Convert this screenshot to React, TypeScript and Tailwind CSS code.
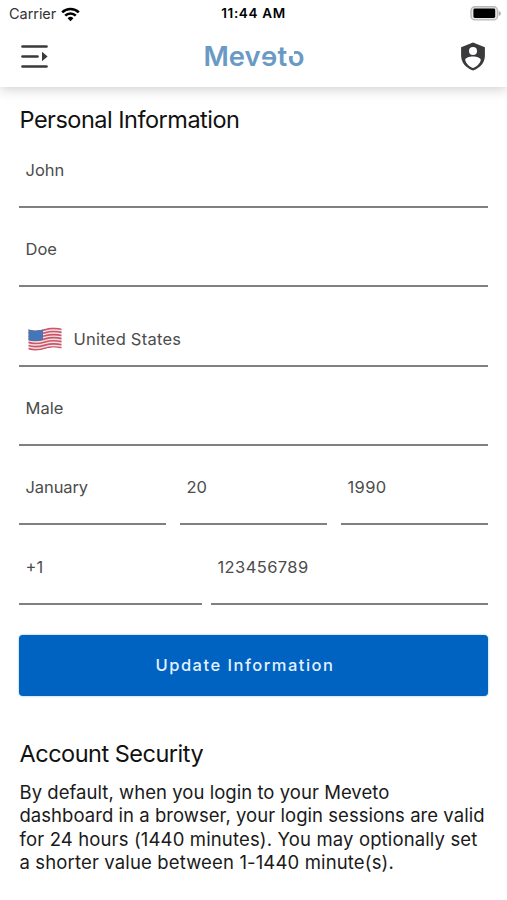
import React from 'react';
import clsx from 'clsx';

interface FieldProps {
  value: string;
  className?: string;
  textClassName?: string;
  icon?: React.ReactNode;
}

function Field({ value, className, textClassName, icon }: FieldProps) {
  return (
    <div className={clsx('flex h-[79.3px] flex-col justify-end', className)}>
      <div className={clsx('flex items-center pl-[6.5px]', icon ? 'h-[51px]' : 'h-[72px]')}>
        {icon}
        <span className={clsx('text-[16.5px] leading-6 text-[#4c4c4c]', textClassName)}>{value}</span>
      </div>
      <div className="h-[2px] shrink-0 bg-[#808080]" />
    </div>
  );
}

function StatusBar() {
  return (
    <div className="grid h-7 grid-cols-3 items-center pl-[9px] pr-[6px] text-black">
      <div className="flex items-center gap-[5px]">
        <span className="text-[14.5px] leading-7 tracking-[-0.05px] text-[#333]">Carrier</span>
        <svg width="19" height="15" viewBox="0 0 19 15" fill="none" stroke="#000" strokeWidth="2.6">
          <path d="M1.2 5.4a12 12 0 0 1 16.6 0" />
          <path d="M4.2 8.6a7.6 7.6 0 0 1 10.6 0" />
          <path d="M9.5 14.2 6.6 11.2a4.1 4.1 0 0 1 5.8 0Z" fill="#000" stroke="none" />
        </svg>
      </div>
      <span className="pb-px pr-[3px] text-center text-[13.5px] font-semibold tracking-[0.65px]">11:44 AM</span>
      <svg className="mb-[2px] justify-self-end" width="31" height="15" viewBox="0 0 31 15">
        <rect x="1" y="0.7" width="26.6" height="13.2" rx="4" fill="#e8e8e8" stroke="#b8b8b8" strokeWidth="1.4" />
        <rect x="3.4" y="2.6" width="21.8" height="9.4" rx="1.4" fill="#000" />
        <path d="M28.8 5v5c1.3-.5 2-1.4 2-2.5s-.7-2-2-2.5Z" fill="#aaa" />
      </svg>
    </div>
  );
}

function Logo() {
  return (
    <div className="flex text-[27.5px] font-semibold leading-8 text-[#6a9ac4]">
      <span>Mev</span>
      <span className="inline-block -scale-x-100">e</span>
      <span className="ml-[0.5px]">t</span>
      <span className="relative ml-[0.5px]">
        o
        <span className="absolute left-0 top-[10px] h-[6px] w-[6px] bg-white" />
      </span>
    </div>
  );
}

function Flag() {
  return (
    <svg className="ml-[2.5px] mr-[11.5px]" width="34" height="24" viewBox="0 0 34 24">
      <defs>
        <clipPath id="flag">
          <path d="M.5 2.3C6 4.2 11 3.6 17 1.8S28 .2 33.500 1.500V21.500C28 20 23 20.200 17 22S6 24.500 .5 22.500Z" />
        </clipPath>
      </defs>
      <g clipPath="url(#flag)">
        <rect width="34" height="24" fill="#efe3e6" />
        <g fill="none" stroke="#cf5468" strokeWidth="1.65">
          <path d="M0 3C6 5 11 4.400 17 2.600S28 1 34 2.300" />
          <path d="M0 6.100C6 8.100 11 7.500 17 5.700S28 4.100 34 5.400" />
          <path d="M0 9.200C6 11.200 11 10.600 17 8.800S28 7.200 34 8.500" />
          <path d="M0 12.300C6 14.300 11 13.700 17 11.900S28 10.300 34 11.600" />
          <path d="M0 15.400C6 17.400 11 16.800 17 15S28 13.400 34 14.700" />
          <path d="M0 18.500C6 20.500 11 19.900 17 18.100S28 16.500 34 17.800" />
          <path d="M0 21.600C6 23.600 11 23 17 21.200S28 19.600 34 20.900" />
        </g>
        <path d="M0 2C5 4 10 3.700 15 2.300V12.700C10 14.200 5 14.700 0 13Z" fill="#4377b5" />
      </g>
    </svg>
  );
}

export default function App() {
  return (
    <div className="flex h-[900px] w-full flex-col overflow-hidden bg-white font-['Inter','Liberation_Sans',sans-serif]">
      <header className="h-[87px] shrink-0 bg-white shadow-[0_2px_12px_rgba(0,0,0,0.2)]">
        <StatusBar />
        <div className="flex h-14 items-center justify-between px-[21px]">
          <svg width="27" height="25" viewBox="0 0 27 25" fill="none" stroke="#3a3a3c" strokeWidth="2.7" strokeLinecap="round">
            <path d="M1.5 2.5h24M1.5 12.5h15M1.5 22.5h24" />
            <path d="M21 7.800v9.400l5.600-4.700Z" fill="#3a3a3c" stroke="none" />
          </svg>
          <Logo />
          <svg width="26" height="29" viewBox="0 0 26 29">
            <path d="M13 .5 24.900 5.200V13.500c0 7-4.700 12.400-11.900 15-7.200-2.600-11.900-8-11.900-15V5.200Z" fill="#3a3a3c" />
            <circle cx="13" cy="9" r="4" fill="#fff" />
            <path d="M5.200 18c0-2.400 4-3.600 7.800-3.600s7.800 1.200 7.800 3.600c-.8 3.600-4.300 7-7.800 8-3.500-1-7-4.400-7.800-8Z" fill="#fff" />
          </svg>
        </div>
      </header>

      <main className="px-[19px] pt-[17px]">
        <h1 className="h-[24.8px] pl-[0.5px] text-[23.5px] leading-8 tracking-[-0.5px] text-[#111]">Personal Information</h1>
        <form>
          <Field value="John" />
          <Field value="Doe" />
          <Field value="United States" icon={<Flag />} textClassName="tracking-[0.25px]" />
          <Field value="Male" />
          <div className="flex gap-[14px]">
            <Field value="January" className="flex-1" textClassName="tracking-[-0.1px]" />
            <Field value="20" className="flex-1" />
            <Field value="1990" className="flex-1" textClassName="tracking-[0.35px]" />
          </div>
          <div className="flex gap-[9px]">
            <Field value="+1" className="w-[183px]" />
            <Field value="123456789" className="flex-1" textClassName="tracking-[0.4px]" />
          </div>
          <button
            type="button"
            className="mt-[30.2px] block h-[61px] w-full rounded-[4px] bg-[#0062c1] pr-[17px] text-[16.5px] font-medium tracking-[1.5px] text-[#e3f1ff] shadow-[0_0_2px_#0062c180]"
          >
            Update Information
          </button>
        </form>

        <h2 className="mt-[42.5px] pl-[0.5px] text-[23.5px] leading-8 tracking-[-0.5px] text-[#111]">Account Security</h2>
        <p className="mt-[10.5px] whitespace-nowrap pl-[0.5px] text-[18.5px] leading-[23.5px] tracking-[0.04px] text-[#1a1a1a]">
          By default, when you login to your Meveto
          <br />
          dashboard in a browser, your login sessions are valid
          <br />
          <span className="tracking-[0.14px]">
            for 24 hours (1440 minutes). You may optionally set
            <br />
            a shorter value between 1-1440 minute(s).
          </span>
        </p>
      </main>
    </div>
  );
}
